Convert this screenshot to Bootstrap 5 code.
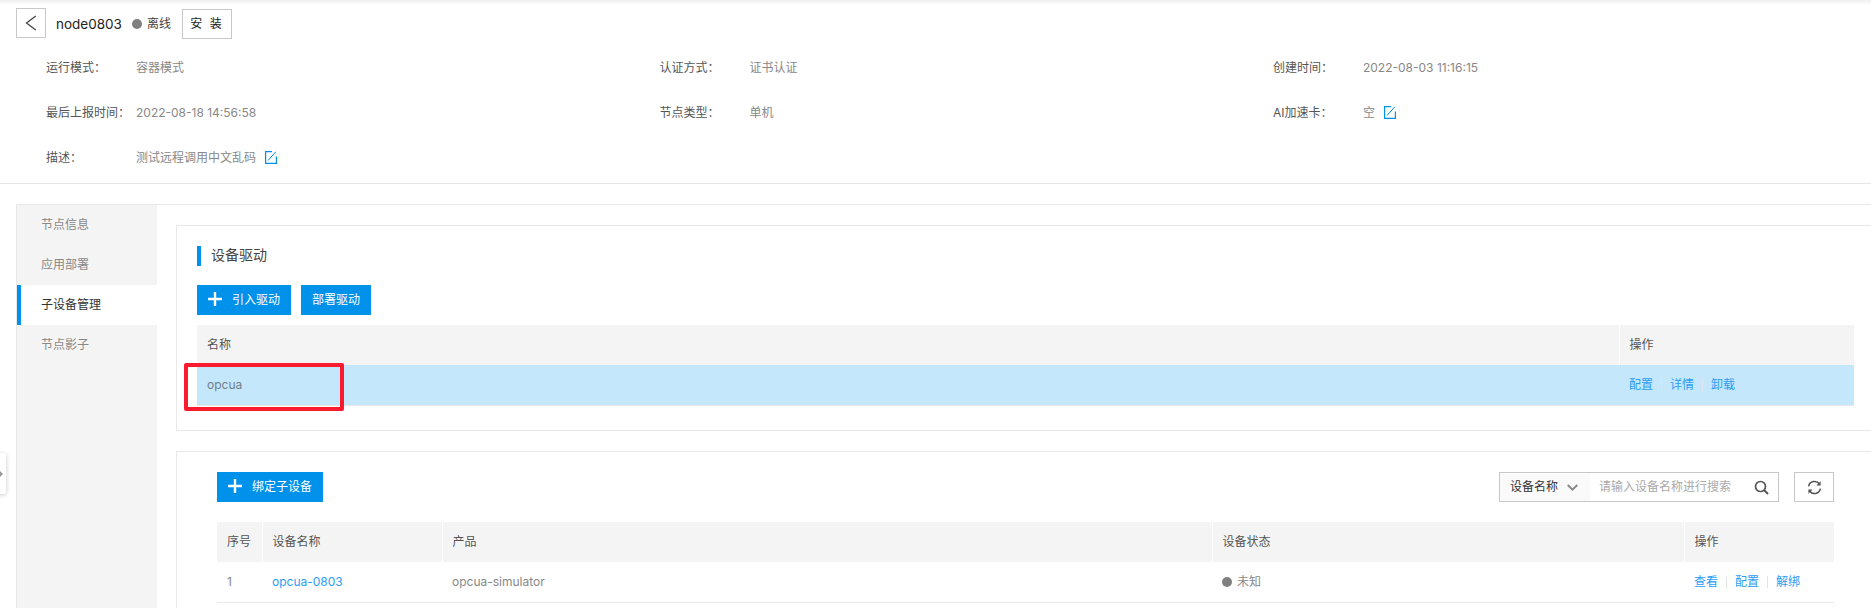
<!DOCTYPE html>
<html lang="zh-CN">
<head>
<meta charset="utf-8">
<title>node0803</title>
<link href="https://cdn.jsdelivr.net/npm/bootstrap@5.3.0/dist/css/bootstrap.min.css" rel="stylesheet">
<style>
html,body{height:608px;overflow:hidden;background:#fff}
body{font-family:Inter,"Noto Sans CJK SC",sans-serif;font-size:12px;color:#555;line-height:18px}
.pg{position:relative;height:608px;overflow:hidden}
.topshade{height:5px;margin-bottom:3px;background:linear-gradient(#efefef,#fff)}
.head{height:31px;padding-left:16px}
.sq-btn{width:30px;height:30px;border:1px solid #c8c8c8;background:#fff;padding:0;border-radius:0}
.inst-btn{width:50px;height:30px;margin-top:1px;border:1px solid #c8c8c8;background:#fff;color:#222;font-size:12px;padding:0;border-radius:0;letter-spacing:2px;margin-left:11px}
.ttl{margin-left:10px;font-size:13.5px;color:#222;width:65px}
.dot{width:10px;height:10px;border-radius:50%;background:#808080;margin-left:11px;margin-right:5px}
.stat{color:#444}
.info{padding-left:46px;width:1886.5px;padding-top:6px;height:144px}
.info .row{height:45px;align-items:center;--bs-gutter-x:0}
.lab{width:90px;color:#555;flex:none}
.val{color:#888}
.ed{margin-left:9px;width:12px;height:13px;flex:none}
.sep{border-top:1px solid #e4e4e4;height:21px}
.work{margin-left:16px;height:424px;border-top:1px solid #e8e8e8;border-left:1px solid #e8e8e8}
.side{width:140px;flex:none;background:#f4f4f4}
.side a{display:block;height:40px;line-height:40px;padding-left:24px;color:#888;text-decoration:none}
.side a.on{background:#fff;color:#333;border-left:4px solid #0091ea;padding-left:20px}
.main{padding:20px 0 0 19px;flex:1;min-width:0}
.box{border:1px solid #e8e8e8;border-right:0;background:#fff}
.box1{height:206px;padding:20px 17px 0 20px;margin-bottom:20px}
.box2{height:200px;padding:20px 37px 0 40px}
.hd{border-left:4px solid #0091ea;height:20px;line-height:18px;padding-left:10px;font-size:14px;color:#444;margin-bottom:19px}
.act{height:30px;background:#0091ea;color:#fff;border:0;border-radius:0;font-size:12px;padding:0 11px;line-height:30px}
.act:hover{background:#0091ea;color:#fff}
.act svg{margin-right:10px;vertical-align:-2px}
.act+.act{margin-left:10px}
.tb{table-layout:fixed;margin:0;width:100%;--bs-table-bg:transparent;font-size:12px}
.tb th{height:40px;background:#f4f4f4;font-weight:400;color:#555;border-bottom:0;border-right:1px solid #fff;padding:0 10px;vertical-align:middle;white-space:nowrap}
.tb th:last-child{border-right:0}
.tb td{height:40px;padding:0 10px;vertical-align:middle;color:#888;border-bottom:1px solid #e8e8e8}
.tb tr.sel td{background:#c5e7fc;color:#6f7f8a}
.lk{color:#2a9df4;text-decoration:none}
.lk-s{display:inline-block;width:1px;height:12px;background:#dfe5ea;margin:0 8px;vertical-align:-2px}
.tb1{margin-top:10px}
.redbox{position:absolute;left:184px;top:363px;width:160px;height:48px;border:4px solid #fb1b2f;border-radius:2px;pointer-events:none}
.tool{margin-bottom:20px}
.srch{width:280px;height:30px;border:1px solid #c8c8c8}
.srch-l{width:90px;background:#fafafa;color:#333;padding-left:10px;flex:none}
.srch-l svg{margin-left:9px}
.srch-p{padding-left:9px;color:#aaa;flex:1}
.srch-i{margin-right:9px}
.ref{width:40px;height:30px;border:1px solid #c8c8c8;margin-left:15px;background:#fff;padding:0;border-radius:0}
.st{width:10px;height:10px;border-radius:50%;background:#808080;display:inline-block;margin-right:5px;vertical-align:-1px}
.tog{position:absolute;left:-4px;top:453px;width:10px;height:41px;background:#fff;border-radius:3px;box-shadow:0 1px 5px rgba(0,0,0,.22)}
.tog i{position:absolute;left:4px;top:18px;border-left:3px solid #999;border-top:3px solid transparent;border-bottom:3px solid transparent}
</style>
</head>
<body>
<div class="pg">
  <div class="topshade"></div>
  <div class="head d-flex align-items-start">
    <button class="sq-btn d-flex align-items-center justify-content-center" aria-label="back">
      <svg width="12" height="16" viewBox="0 0 12 16"><path d="M10.8 1 1.5 8l9.3 7" fill="none" stroke="#444" stroke-width="1.3"/></svg>
    </button>
    <span class="ttl align-self-center">node0803</span>
    <span class="dot align-self-center"></span>
    <span class="stat align-self-center">离线</span>
    <button class="inst-btn">安 装</button>
  </div>
  <div class="info">
    <div class="row">
      <div class="col-4 d-flex"><span class="lab">运行模式：</span><span class="val">容器模式</span></div>
      <div class="col-4 d-flex"><span class="lab">认证方式：</span><span class="val">证书认证</span></div>
      <div class="col-4 d-flex"><span class="lab">创建时间：</span><span class="val">2022-08-03 11:16:15</span></div>
    </div>
    <div class="row">
      <div class="col-4 d-flex"><span class="lab">最后上报时间：</span><span class="val">2022-08-18 14:56:58</span></div>
      <div class="col-4 d-flex"><span class="lab">节点类型：</span><span class="val">单机</span></div>
      <div class="col-4 d-flex align-items-center"><span class="lab">AI加速卡：</span><span class="val">空</span>
        <svg class="ed" viewBox="0 0 12 13"><path d="M7 .6H.6v11.8h10.8V5.5" fill="none" stroke="#0091ea" stroke-width="1.2"/><path d="M3 9.5 10.8.8" stroke="#0091ea" stroke-width="1"/></svg></div>
    </div>
    <div class="row">
      <div class="col-4 d-flex align-items-center"><span class="lab">描述：</span><span class="val">测试远程调用中文乱码</span>
        <svg class="ed" viewBox="0 0 12 13"><path d="M7 .6H.6v11.8h10.8V5.5" fill="none" stroke="#0091ea" stroke-width="1.2"/><path d="M3 9.5 10.8.8" stroke="#0091ea" stroke-width="1"/></svg></div>
    </div>
  </div>
  <div class="sep"></div>
  <div class="work d-flex">
    <nav class="side">
      <a href="#">节点信息</a>
      <a href="#">应用部署</a>
      <a href="#" class="on">子设备管理</a>
      <a href="#">节点影子</a>
    </nav>
    <div class="main">
      <section class="box box1">
        <div class="hd">设备驱动</div>
        <div>
          <button class="btn act"><svg width="14" height="14" viewBox="0 0 14 14"><path d="M7 0v14M0 7h14" stroke="#fff" stroke-width="2.4"/></svg>引入驱动</button><button class="btn act">部署驱动</button>
        </div>
        <table class="table tb tb1">
          <colgroup><col><col style="width:235px"></colgroup>
          <thead><tr><th>名称</th><th>操作</th></tr></thead>
          <tbody><tr class="sel"><td>opcua</td><td><a class="lk" href="#">配置</a><span class="lk-s"></span><a class="lk" href="#">详情</a><span class="lk-s"></span><a class="lk" href="#">卸载</a></td></tr></tbody>
        </table>
      </section>
      <section class="box box2">
        <div class="tool d-flex justify-content-between">
          <button class="btn act"><svg width="14" height="14" viewBox="0 0 14 14"><path d="M7 0v14M0 7h14" stroke="#fff" stroke-width="2.4"/></svg>绑定子设备</button>
          <div class="d-flex">
            <div class="srch d-flex align-items-center">
              <div class="srch-l d-flex align-items-center h-100">设备名称<svg width="11" height="7" viewBox="0 0 11 7"><path d="M.7 1l4.8 4.6L10.3 1" fill="none" stroke="#888" stroke-width="1.9"/></svg></div>
              <div class="srch-p">请输入设备名称进行搜索</div>
              <svg class="srch-i" width="15" height="15" viewBox="0 0 15 15"><circle cx="6.5" cy="6.5" r="5" fill="none" stroke="#555" stroke-width="1.7"/><path d="M10 10l4 4" stroke="#555" stroke-width="2"/></svg>
            </div>
            <button class="ref d-flex align-items-center justify-content-center" aria-label="refresh">
              <svg width="15" height="15" viewBox="0 0 15 15"><path d="M1.6 6.3A6 6 0 0 1 12.4 4" fill="none" stroke="#555" stroke-width="1.5"/><path d="M13.4 8.7A6 6 0 0 1 2.6 11" fill="none" stroke="#555" stroke-width="1.5"/><path d="M13.6 1.2v4.3H9.4zM1.4 13.8V9.5h4.2z" fill="#555"/></svg>
            </button>
          </div>
        </div>
        <table class="table tb">
          <colgroup><col style="width:45px"><col style="width:180px"><col style="width:770px"><col><col style="width:150px"></colgroup>
          <thead><tr><th>序号</th><th>设备名称</th><th>产品</th><th>设备状态</th><th>操作</th></tr></thead>
          <tbody><tr><td>1</td><td><a class="lk" href="#">opcua-0803</a></td><td>opcua-simulator</td><td><span class="st"></span>未知</td><td><a class="lk" href="#">查看</a><span class="lk-s"></span><a class="lk" href="#">配置</a><span class="lk-s"></span><a class="lk" href="#">解绑</a></td></tr></tbody>
        </table>
      </section>
    </div>
  </div>
  <div class="redbox"></div>
  <div class="tog"><i></i></div>
</div>
<script src="https://cdn.jsdelivr.net/npm/bootstrap@5.3.0/dist/js/bootstrap.bundle.min.js"></script>
</body>
</html>
